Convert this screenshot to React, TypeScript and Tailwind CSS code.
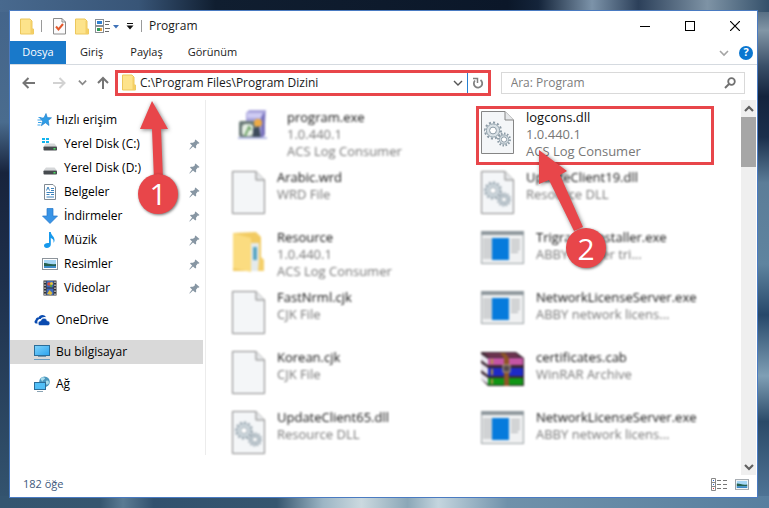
import type { ReactNode } from "react";

/* ---------- small icons ---------- */

function FolderIcon() {
  return (
    <svg width="14" height="17" viewBox="0 0 14 17" aria-hidden="true">
      <path d="M0.5 1 H10 L12 3 V11 H13.5 V16 H0.5 Z" fill="#fde38b" stroke="#ecc75c" strokeWidth="1" />
      <path d="M10.5 3 V16 H13.5 V11 H12 V3 Z" fill="#f4cf66" />
    </svg>
  );
}

function CheckDocIcon() {
  return (
    <svg width="13" height="17" viewBox="0 0 13 17" aria-hidden="true">
      <path d="M0.5 0.5 H9 L12.5 4 V16 H0.5 Z" fill="#fbfbfc" stroke="#8b8b8b" />
      <path d="M9 0.5 V4 H12.5" fill="none" stroke="#8b8b8b" />
      <path d="M3 8.5 L5.5 11.5 L10 6" fill="none" stroke="#e2582c" strokeWidth="2" />
    </svg>
  );
}

function ViewIcon() {
  return (
    <svg width="24" height="15" viewBox="0 0 24 15" aria-hidden="true">
      <rect x="0.5" y="0.5" width="8" height="6" fill="#fff" stroke="#8a8f94" />
      <rect x="2" y="2" width="5" height="3" fill="#2f7fd0" />
      <rect x="0.5" y="7.5" width="8" height="6" fill="#fff" stroke="#8a8f94" />
      <rect x="2" y="9" width="3" height="3" fill="#2f9a57" />
      <rect x="5" y="9" width="2" height="3" fill="#e0a040" />
      <path d="M10 2.5h5M10 5.5h4M10 9.5h5M10 12.5h4" stroke="#6b6b6b" />
      <path d="M18 6h6l-3 3.5z" fill="#3f72b8" />
    </svg>
  );
}

function Chevron({ up = false, color = "#606060", size = 10, weight = 1.6 }: { up?: boolean; color?: string; size?: number; weight?: number }) {
  return (
    <svg width={size} height={size} viewBox="0 0 10 10" aria-hidden="true">
      <path d={up ? "M1 7 L5 3 L9 7" : "M1 3 L5 7 L9 3"} fill="none" stroke={color} strokeWidth={weight} />
    </svg>
  );
}

function ArrowIcon({ direction, color }: { direction: "left" | "right" | "up"; color: string }) {
  const d = {
    left: "M13 7 H2 M6.5 2 L1.5 7 L6.5 12",
    right: "M1 7 H12 M7.5 2 L12.5 7 L7.5 12",
    up: "M7 13 V2 M2 7 L7 2 L12 7",
  }[direction];
  return (
    <svg width="14" height="14" viewBox="0 0 14 14" aria-hidden="true">
      <path d={d} fill="none" stroke={color} strokeWidth="2" />
    </svg>
  );
}

function PinIcon() {
  return (
    <svg width="11" height="11" viewBox="0 0 11 11" aria-hidden="true">
      <path d="M6.5 0.5 L10.5 4 L9.5 4.8 L8.8 4.6 L7 6.8 L7.2 8.8 L6.3 9.4 L4 7.4 L0.8 10.6 L0.3 10.2 L3.1 6.6 L1 4.5 L1.8 3.7 L4 3.8 L6 2.2 L5.8 1.2 Z" fill="#8796a3" />
    </svg>
  );
}

function StarIcon() {
  return (
    <svg width="15" height="14" viewBox="0 0 15 14" aria-hidden="true">
      <path d="M9 0.5 L10.3 4.6 L14.5 4.8 L11.2 7.5 L12 12.5 L8.4 9.8 L4.3 12.8 L5.6 8.3 L3 5.4 L7 4.8 Z" fill="#2f9de6" stroke="#1a79c8" strokeWidth="0.6" />
      <path d="M1.5 4.5h3M0.5 7h3.5M1 9.5h3.5M0.5 12h3" stroke="#3aa2e8" strokeWidth="1" />
    </svg>
  );
}

function DriveIcon({ system = false }: { system?: boolean }) {
  return (
    <svg width="16" height="16" viewBox="0 0 16 16" aria-hidden="true">
      {system && <path d="M0 2h3v2h-3zM4 2h3v2h-3zM0 5h3v2h-3zM4 5h3v2h-3z" fill="#12b4ee" />}
      <path d="M4 7.5 H12.5 L15 10.5 H1.5 Z" fill="#d5d7d9" />
      <rect x="1.500" y="10.500" width="13.500" height="4" rx="0.800" fill="#474b4f" />
      <rect x="11.500" y="12" width="2" height="1.500" fill="#48e060" />
    </svg>
  );
}

function DocumentsIcon() {
  return (
    <svg width="16" height="16" viewBox="0 0 16 16" aria-hidden="true">
      <path d="M2.5 0.500 H11 L13.500 3 V15.500 H2.500 Z" fill="#fff" stroke="#808a93" />
      <path d="M4.500 6.500 L6 3 L7.500 6.500 M9 4.500h3M9 6.500h3M4.500 8.500h7.500M4.500 10.500h3M9 10.500h3M4.500 13h7.500" fill="none" stroke="#3c82bc" />
    </svg>
  );
}

function DownloadIcon() {
  return (
    <svg width="16" height="16" viewBox="0 0 16 16" aria-hidden="true">
      <path d="M5 0.500 H11 V8 H15.500 L8 15.500 L0.500 8 H5 Z" fill="#3994e6" stroke="#2377c8" strokeWidth="0.700" />
    </svg>
  );
}

function MusicIcon() {
  return (
    <svg width="16" height="16" viewBox="0 0 16 16" aria-hidden="true">
      <path d="M7 0 H8.800 C9 3.500 13 4.500 12.500 9 L11.500 11 C12 7.500 10.500 6.800 8.800 6 V12.500 C8.800 14.500 6.800 16 4.800 16 C3 16 2 15 2 13.600 C2 11.700 4.500 10.500 7 11 Z" fill="#1799ec" />
    </svg>
  );
}

function PictureIcon({ small = false }: { small?: boolean }) {
  return (
    <svg width={small ? 14 : 16} height={small ? 11 : 12} viewBox="0 0 16 12" aria-hidden="true">
      <rect x="0.500" y="0.500" width="15" height="11" fill="#fff" stroke="#8c949b" />
      <rect x="2" y="2" width="12" height="8" fill="#a5d6f5" />
      <path d="M2 5 C5 4.500 8 7 14 6 V8 H2 Z" fill="#25614f" />
      <path d="M2 8 H14 V10 H2 Z" fill="#3d8bc7" />
    </svg>
  );
}

function VideoIcon() {
  return (
    <svg width="16" height="16" viewBox="0 0 16 16" aria-hidden="true">
      <rect x="1.500" y="0.500" width="13" height="15" fill="#333" />
      <path d="M3 1.500V15M13 1.500V15" stroke="#e8e8e8" strokeWidth="1.200" strokeDasharray="1.500 1.500" />
      <rect x="4.500" y="1" width="7" height="6.500" fill="#3e69bd" />
      <rect x="4.500" y="8.500" width="7" height="6.500" fill="#3e69bd" />
      <circle cx="7" cy="4" r="1.800" fill="#d7503a" />
      <circle cx="9.500" cy="3.500" r="1.500" fill="#e8c33c" />
      <circle cx="9" cy="6" r="1.200" fill="#5aa042" />
      <path d="M5 14 L7.500 10 L10.500 13 L9 15 Z" fill="#e0bb3c" />
    </svg>
  );
}

function OneDriveIcon() {
  return (
    <svg width="16" height="12" viewBox="0 0 16 12" aria-hidden="true">
      <path d="M2.300 9.500 C0.300 9.500 0 7 1.500 6 C2 3.700 3.500 3.300 4.500 3.500 C5.500 0.500 10.500 0 12 3.300 C9.500 2.700 7.500 3.500 6.800 5 C4 4.500 2.500 7.500 3.800 9.500 Z" fill="#0a4bb0" />
      <path d="M6 11.500 C3.500 11.500 3.500 7 6.800 6.800 C7.500 3.800 12 3.300 13 6.700 C16.500 6.500 16.800 11.500 13.800 11.500 Z" fill="#0a4bb0" stroke="#fff" strokeWidth="0.500" />
    </svg>
  );
}

function ComputerIcon() {
  return (
    <svg width="16" height="16" viewBox="0 0 16 16" aria-hidden="true">
      <defs>
        <linearGradient id="screen" x1="0" y1="0" x2="1" y2="1">
          <stop offset="0" stopColor="#7fd3fb" />
          <stop offset="1" stopColor="#2ca3ee" />
        </linearGradient>
      </defs>
      <rect x="0.500" y="1.500" width="15" height="10" fill="url(#screen)" stroke="#2b6d99" />
      <path d="M4 12.500h8" stroke="#7694a8" />
      <path d="M0 15.500h16" stroke="#6b9dc0" />
    </svg>
  );
}

function NetworkIcon() {
  return (
    <svg width="16" height="16" viewBox="0 0 16 16" aria-hidden="true">
      <circle cx="10.500" cy="5.700" r="5.300" fill="#4a96bd" />
      <path d="M6.500 3 C8 0.500 10 1 11 2 C11 4 8 4 8.500 6 Z M12 5 C14 4 15 5 15 7 C14 9 12.500 9 12 8 Z" fill="#a9dcec" />
      <rect x="0.500" y="6.500" width="11" height="7" fill="#52bff7" stroke="#2b6d99" />
      <path d="M3 15.500h6" stroke="#8aa3b3" />
    </svg>
  );
}

/* ---------- file icons ---------- */

function Gear({ cx, cy, r }: { cx: number; cy: number; r: number }) {
  return (
    <g>
      <circle cx={cx} cy={cy} r={r - 1} fill="none" stroke="#8c9ba6" strokeWidth="2" pathLength={24} strokeDasharray="1 1" />
      <circle cx={cx} cy={cy} r={r - 2.4} fill="#d9e1e6" stroke="#93a3ad" strokeWidth="1" />
      <circle cx={cx} cy={cy} r={r * 0.38} fill="#fff" stroke="#8c9ba6" strokeWidth="1" />
    </g>
  );
}

function PageIcon({ gears = false }: { gears?: boolean }) {
  return (
    <svg width="33" height="43" viewBox="0 0 33 43" aria-hidden="true">
      <path d="M0.500 0.500 H24 L32.500 9 V42.500 H0.500 Z" fill="#f4f6f8" stroke="#858585" />
      <path d="M24 0.500 V9 H32.500" fill="#e6e8ea" stroke="#858585" />
      {gears && <Gear cx={12} cy={19.5} r={9} />}
      {gears && <Gear cx={23} cy={28.5} r={7} />}
    </svg>
  );
}

function ProgramWindowIcon() {
  return (
    <svg width="43" height="33" viewBox="0 0 43 33" aria-hidden="true">
      <rect x="0.500" y="0.500" width="42" height="32" fill="#f0f1f2" stroke="#9aa0a4" />
      <rect x="0" y="0" width="43" height="4" fill="#8f989d" />
      <rect x="2" y="7" width="9" height="21" fill="#d0d2d4" />
      <rect x="11" y="7" width="17" height="22" fill="#067bdc" />
      <path d="M30 9h9M30 12h9M30 15h9M30 18h9M30 21h7" stroke="#b4b7b9" strokeWidth="1.500" />
    </svg>
  );
}

function LargeFolderIcon() {
  return (
    <svg width="33" height="42" viewBox="0 0 33 42" aria-hidden="true">
      <path d="M1 2 L24 1 L29 6 V26 L32 29 V40 H1 Z" fill="#f2cb62" />
      <path d="M18 12 H27 V40 H19 Z" fill="#e4eaeb" />
      <path d="M21 16 H25 V29 H21 Z" fill="#5aa6c4" />
      <path d="M1 2 L19 7 V41 L1 37 Z" fill="#fbdc80" />
      <path d="M27 27 L32 29 V40 H26 Z" fill="#f5d06b" />
    </svg>
  );
}

function InstallerIcon() {
  return (
    <svg width="33" height="33" viewBox="0 0 33 33" aria-hidden="true">
      <path d="M9 4 L12 1 H29 L27 28 L9 30 Z" fill="#aaa6dc" />
      <path d="M10 4 H25 V9 H10 Z" fill="#cecbf3" />
      <path d="M24 8 L28 3 V26 L24 29 Z" fill="#7a74bd" />
      <rect x="2" y="12" width="17" height="16" rx="2" fill="#6d7c79" />
      <rect x="5" y="15" width="11" height="12" rx="4" fill="#e6efe4" />
      <path d="M8 27 L12 18 L14 21" fill="none" stroke="#6fa268" strokeWidth="2" />
      <circle cx="21" cy="14" r="4" fill="#efab45" />
      <path d="M16 20 L22 17 L24 29 H16 Z" fill="#3e4b5c" />
      <path d="M1 29 H30" stroke="#b9bee6" strokeWidth="2" />
    </svg>
  );
}

function ArchiveIcon() {
  return (
    <svg width="43" height="36" viewBox="0 0 43 36" aria-hidden="true">
      <path d="M0 1 H35 L43 7 V35 H7 L0 28 Z" fill="#3d2834" />
      <path d="M3 2 H34 L39 6 H8 Z" fill="#6e3350" />
      <path d="M7 7 H42 V14 H7 Z" fill="#c455a4" />
      <path d="M7 17 H42 V25 H7 Z" fill="#1d2ac8" />
      <path d="M7 27 H42 V34 H7 Z" fill="#119516" />
      <path d="M0 3 L7 8 V14 L0 9 Z M0 12 L7 17 V24 L0 19 Z M0 22 L7 27 V33 L0 28 Z" fill="#e8e6ef" />
      <path d="M19 2 H24 L28 7 V35 H23 V7 Z" fill="#8f5527" />
      <rect x="22" y="14" width="7" height="7" fill="#55484a" stroke="#b8a58a" />
      <path d="M11 8v5M11 18v6M11 28v5" stroke="#b59444" strokeWidth="2" />
    </svg>
  );
}

/* ---------- data ---------- */

const quickAccess: { label: string; icon: ReactNode }[] = [
  { label: "Yerel Disk (C:)", icon: <DriveIcon system /> },
  { label: "Yerel Disk (D:)", icon: <DriveIcon /> },
  { label: "Belgeler", icon: <DocumentsIcon /> },
  { label: "İndirmeler", icon: <DownloadIcon /> },
  { label: "Müzik", icon: <MusicIcon /> },
  { label: "Resimler", icon: <PictureIcon /> },
  { label: "Videolar", icon: <VideoIcon /> },
];

type FileEntry = { name: string; details: string[]; icon: ReactNode; highlighted?: boolean; centered?: boolean };

const files: FileEntry[] = [
  { name: "program.exe", details: ["1.0.440.1", "ACS Log Consumer"], icon: <InstallerIcon />, centered: true },
  { name: "logcons.dll", details: ["1.0.440.1", "ACS Log Consumer"], icon: <PageIcon gears />, highlighted: true },
  { name: "Arabic.wrd", details: ["WRD File"], icon: <PageIcon /> },
  { name: "UpdateClient19.dll", details: ["Resource DLL"], icon: <PageIcon gears /> },
  { name: "Resource", details: ["1.0.440.1", "ACS Log Consumer"], icon: <LargeFolderIcon /> },
  { name: "Trigrams.Installer.exe", details: ["ABBY Reader tri..."], icon: <ProgramWindowIcon /> },
  { name: "FastNrml.cjk", details: ["CJK File"], icon: <PageIcon /> },
  { name: "NetworkLicenseServer.exe", details: ["ABBY network licens..."], icon: <ProgramWindowIcon /> },
  { name: "Korean.cjk", details: ["CJK File"], icon: <PageIcon /> },
  { name: "certificates.cab", details: ["WinRAR Archive"], icon: <ArchiveIcon /> },
  { name: "UpdateClient65.dll", details: ["Resource DLL"], icon: <PageIcon gears /> },
  { name: "NetworkLicenseServer.exe", details: ["ABBY network licens..."], icon: <ProgramWindowIcon /> },
];

/* ---------- parts ---------- */

function Backdrop() {
  return (
    <svg className="absolute inset-0 h-full w-full" viewBox="0 0 769 508" preserveAspectRatio="none" aria-hidden="true">
      <defs>
        <linearGradient id="left" x1="0" y1="0" x2="0" y2="1">
          <stop offset="0" stopColor="#43648a" />
          <stop offset="0.240" stopColor="#4a6c8e" />
          <stop offset="0.340" stopColor="#17233c" />
          <stop offset="0.550" stopColor="#1d2f4b" />
          <stop offset="1" stopColor="#345570" />
        </linearGradient>
        <linearGradient id="top" x1="0" y1="0" x2="1" y2="0">
          <stop offset="0" stopColor="#48698e" />
          <stop offset="0.180" stopColor="#385577" />
          <stop offset="0.280" stopColor="#101e30" />
          <stop offset="0.660" stopColor="#0b1729" />
          <stop offset="0.700" stopColor="#14243a" />
          <stop offset="0.770" stopColor="#7c93a9" />
          <stop offset="0.830" stopColor="#2c405a" />
          <stop offset="0.920" stopColor="#7e93a5" />
          <stop offset="1" stopColor="#34506a" />
        </linearGradient>
        <linearGradient id="right" x1="0" y1="0" x2="0" y2="1">
          <stop offset="0" stopColor="#3d566f" />
          <stop offset="0.060" stopColor="#8296a6" />
          <stop offset="0.130" stopColor="#3a4f68" />
          <stop offset="0.190" stopColor="#14233d" />
          <stop offset="0.270" stopColor="#1b2f4c" />
          <stop offset="0.360" stopColor="#5c7d98" />
          <stop offset="0.520" stopColor="#5f849f" />
          <stop offset="0.620" stopColor="#27486a" />
          <stop offset="0.740" stopColor="#7f9fb5" />
          <stop offset="0.830" stopColor="#2b4a68" />
          <stop offset="1" stopColor="#547a9c" />
        </linearGradient>
        <linearGradient id="bottom" x1="0" y1="0" x2="1" y2="0">
          <stop offset="0" stopColor="#345570" />
          <stop offset="0.130" stopColor="#36566f" />
          <stop offset="0.160" stopColor="#5b7b93" />
          <stop offset="0.200" stopColor="#31516e" />
          <stop offset="0.360" stopColor="#36566f" />
          <stop offset="0.420" stopColor="#9cb5c4" />
          <stop offset="0.470" stopColor="#cbd9df" />
          <stop offset="0.530" stopColor="#8ba7b7" />
          <stop offset="0.570" stopColor="#c4d5de" />
          <stop offset="0.660" stopColor="#6f91aa" />
          <stop offset="1" stopColor="#587f9f" />
        </linearGradient>
      </defs>
      <rect width="769" height="508" fill="#345570" />
      <rect width="30" height="508" fill="url(#left)" />
      <rect x="740" width="29" height="508" fill="url(#right)" />
      <rect width="769" height="12" fill="url(#top)" />
      <rect y="496" width="769" height="12" fill="url(#bottom)" />
    </svg>
  );
}

function TitleBar() {
  return (
    <header className="flex h-[30px] items-center pl-[10px]">
      <FolderIcon />
      <span className="ml-[7px] h-3 w-px bg-[#9a9a9a]" />
      <button className="ml-[11px]" aria-label="Özellikler"><CheckDocIcon /></button>
      <button className="ml-[9px]" aria-label="Yeni klasör"><FolderIcon /></button>
      <button className="ml-[6px]" aria-label="Görünüm seçenekleri"><ViewIcon /></button>
      <button className="ml-[7px]" aria-label="Araç çubuğunu özelleştir">
        <svg width="8" height="8" viewBox="0 0 8 8" aria-hidden="true"><path d="M1 1.500h6" stroke="#111" /><path d="M0.500 3.500h7l-3.500 4z" fill="#111" /></svg>
      </button>
      <span className="ml-[7px] h-3 w-px bg-[#9a9a9a]" />
      <h1 className="ml-[7px] text-[12px]">Program</h1>
      <div className="ml-auto flex h-full">
        <button className="flex w-[45px] items-center justify-center" aria-label="Küçült">
          <svg width="10" height="10" viewBox="0 0 10 10"><path d="M0 5.500h10" stroke="#000" /></svg>
        </button>
        <button className="flex w-[45px] items-center justify-center" aria-label="Büyüt">
          <svg width="10" height="10" viewBox="0 0 10 10"><rect x="0.500" y="0.500" width="9" height="9" fill="none" stroke="#000" /></svg>
        </button>
        <button className="flex w-[45px] items-center justify-center" aria-label="Kapat">
          <svg width="10" height="10" viewBox="0 0 10 10"><path d="M0 0L10 10M10 0L0 10" stroke="#000" strokeWidth="1.200" /></svg>
        </button>
      </div>
    </header>
  );
}

function Ribbon() {
  return (
    <nav className="flex h-6 items-stretch border-b border-[#d5dae0] text-[11px]" aria-label="Şerit">
      <button className="w-14 bg-[#1979ca] text-white">Dosya</button>
      <button className="ml-[14px]">Giriş</button>
      <button className="ml-[27px]">Paylaş</button>
      <button className="ml-[25px]">Görünüm</button>
      <div className="ml-auto flex items-center gap-[10px] pr-[4px]">
        <button aria-label="Şeridi genişlet"><Chevron color="#a5a5a5" /></button>
        <button className="flex size-[14px] items-center justify-center rounded-full bg-[#0a76d0] text-[11px] font-bold text-white" aria-label="Yardım">?</button>
      </div>
    </nav>
  );
}

function AddressRow() {
  return (
    <div className="flex h-[35px] items-center pr-3 pl-3">
      <button aria-label="Geri"><ArrowIcon direction="left" color="#757575" /></button>
      <button className="ml-4" aria-label="İleri"><ArrowIcon direction="right" color="#d2d2d2" /></button>
      <button className="ml-3" aria-label="Son konumlar"><Chevron size={9} color="#8a8a8a" weight={2} /></button>
      <button className="ml-[9px]" aria-label="Yukarı"><ArrowIcon direction="up" color="#757575" /></button>
      <div className="relative ml-[5px] flex h-[26px] min-w-0 flex-[365] items-stretch border-3 border-[#e8464a] pl-1">
        <label htmlFor="address" className="flex items-center" aria-label="Adres"><FolderIcon /></label>
        <input id="address" className="ml-1 min-w-0 flex-1 bg-transparent text-[12px] outline-none" defaultValue="C:\Program Files\Program Dizini" />
        <button className="flex w-[18px] items-center justify-center" aria-label="Önceki konumlar"><Chevron color="#555" weight={1.400} /></button>
        <button className="flex w-[21px] items-center justify-center border-l border-[#2680d2]" aria-label="Yenile">
          <svg width="12" height="12" viewBox="0 0 12 12" aria-hidden="true">
            <path d="M3 3.500 A4.200 4.200 0 1 0 8.500 3" fill="none" stroke="#808080" strokeWidth="1.800" />
            <path d="M1 1.500 H5.500 V6" fill="none" stroke="#808080" strokeWidth="1.500" />
          </svg>
        </button>
        <svg className="absolute top-[27px] left-[14px] z-10 h-[100px] w-[44px] drop-shadow-[1px_1px_2px_rgba(0,0,0,0.5)]" viewBox="0 0 44 100" aria-hidden="true">
          <path d="M20 1 L36 29 L29 29 L31 80 L22 80 L20 29 L8 29 Z" fill="#e8464a" />
        </svg>
        <span className="absolute top-[101px] left-5 z-20 flex size-10 items-center justify-center rounded-full bg-[#e8464a] text-[30px] text-white shadow-[1px_1px_3px_rgba(0,0,0,0.55)]">1</span>
      </div>
      <div className="ml-[10px] flex h-[22px] min-w-0 flex-[225] items-center border border-[#d9d9d9] pr-2 pl-[9px]">
        <input aria-label="Ara: Program" className="min-w-0 flex-1 bg-transparent text-[12px] outline-none placeholder:text-[#7d7d7d]" placeholder="Ara: Program" />
        <svg width="12" height="12" viewBox="0 0 12 12" aria-hidden="true">
          <circle cx="7.500" cy="4.500" r="3.300" fill="none" stroke="#707070" strokeWidth="1.800" />
          <path d="M5 7 L1 11" stroke="#707070" strokeWidth="2" />
        </svg>
      </div>
    </div>
  );
}

function Sidebar() {
  return (
    <nav className="mb-5 w-[196px] shrink-0 border-r border-[#ececec] pt-2 pr-[2px] text-[12px] text-black" aria-label="Gezinti bölmesi">
      <a href="#quick" className="flex h-6 items-center gap-1 pl-[27px]"><StarIcon />Hızlı erişim</a>
      <ul>
        {quickAccess.map((item) => (
          <li key={item.label}>
            <a href="#folder" className="flex h-6 items-center gap-[6px] pr-[3px] pl-8">
              {item.icon}
              <span className="flex-1">{item.label}</span>
              <PinIcon />
            </a>
          </li>
        ))}
      </ul>
      <a href="#onedrive" className="mt-2 flex h-6 items-center gap-[6px] pl-6"><OneDriveIcon />OneDrive</a>
      <a href="#computer" className="mt-2 flex h-6 items-center gap-[6px] bg-[#d9d9d9] pl-6"><ComputerIcon />Bu bilgisayar</a>
      <a href="#network" className="mt-2 flex h-6 items-center gap-[6px] pl-6"><NetworkIcon />Ağ</a>
    </nav>
  );
}

function FileItem({ file }: { file: FileEntry }) {
  return (
    <li className="relative h-[60px]">
      <div className={file.highlighted ? "flex gap-3" : "flex gap-3 blur-[1px]"}>
        <span className={file.centered ? "flex w-[43px] shrink-0 justify-center" : "mt-[2px] shrink-0"}>{file.icon}</span>
        <div className="text-[13px] leading-[17px] whitespace-nowrap">
          <p className="text-[#111]">{file.name}</p>
          {file.details.map((line) => (
            <p key={line} className="text-[#777]">{line}</p>
          ))}
        </div>
      </div>
      {file.highlighted && (
        <>
          <span className="absolute -top-[3px] right-4 bottom-1 -left-[5px] border-3 border-[#e8464a]" />
          <svg className="absolute top-10 left-[52px] z-10 h-[100px] w-[70px] drop-shadow-[1px_1px_2px_rgba(0,0,0,0.5)]" viewBox="0 0 70 100" aria-hidden="true">
            <path d="M6 1 L34 22 L27 26 L50 78 L41 82 L16 31 L6 35 Z" fill="#e8464a" />
          </svg>
          <span className="absolute top-[119px] left-[85px] z-20 flex size-10 items-center justify-center rounded-full bg-[#e8464a] text-[30px] text-white shadow-[1px_1px_3px_rgba(0,0,0,0.55)]">2</span>
        </>
      )}
    </li>
  );
}

function ScrollBar() {
  return (
    <div className="mr-px flex w-[15px] shrink-0 flex-col bg-[#efefef]">
      <button className="flex h-[17px] items-center justify-center" aria-label="Yukarı kaydır"><Chevron up weight={2.200} /></button>
      <div className="h-[50px] bg-[#a6a6a6]" />
      <button className="mt-auto flex h-[17px] items-center justify-center" aria-label="Aşağı kaydır"><Chevron weight={2.200} /></button>
    </div>
  );
}

function StatusBar() {
  return (
    <footer className="flex h-[22px] items-center gap-2 pr-2 pb-1 pl-[13px] text-[11px] text-[#40587c]">
      <span className="flex-1">182 öğe</span>
      <button aria-label="Ayrıntılar">
        <svg width="16" height="13" viewBox="0 0 16 13" aria-hidden="true">
          <path d="M0.500 0.500h4v12h-4zM0.500 4.500h4M0.500 8.500h4" fill="#fff" stroke="#888" />
          <path d="M6 2.500h4M12 2.500h4M6 6.500h4M12 6.500h4M6 10.500h4M12 10.500h4" stroke="#777" />
          <rect x="2" y="2" width="1" height="1" fill="#36c" /><rect x="2" y="6" width="1" height="1" fill="#36c" /><rect x="2" y="10" width="1" height="1" fill="#d33" />
        </svg>
      </button>
      <button aria-label="Büyük simgeler"><PictureIcon small /></button>
    </footer>
  );
}

export default function App() {
  return (
    <div className="relative flex min-h-screen flex-col pt-[10px] pr-[11px] pb-[10px] pl-[9px] font-['Open_Sans','Noto_Sans',sans-serif] text-[#1a1a1a]">
      <Backdrop />
      <main className="relative flex flex-1 flex-col border border-[#4a7bc2] bg-white">
        <TitleBar />
        <Ribbon />
        <AddressRow />
        <div className="flex flex-1">
          <Sidebar />
          <ul className="grid min-w-0 flex-1 auto-rows-min grid-cols-2 pt-[9px] pr-[11px] pl-[26px]">
            {files.map((file, index) => (
              <FileItem key={index} file={file} />
            ))}
          </ul>
          <ScrollBar />
        </div>
        <StatusBar />
      </main>
    </div>
  );
}
